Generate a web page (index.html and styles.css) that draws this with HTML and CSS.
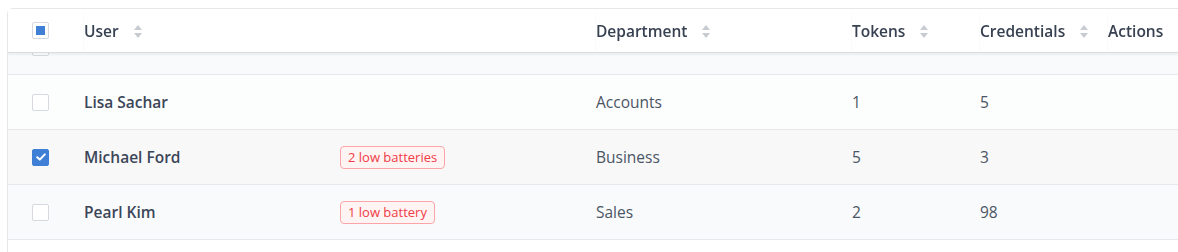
FILE: index.html
```html
<!DOCTYPE html>
<html lang="en">
<head>
    <meta charset="UTF-8">
    <meta name="viewport" content="width=device-width, initial-scale=1.0">
    <title>Users</title>
    <link rel="stylesheet" href="styles.css">
</head>
<body>

    <div class="table-card">
        <div class="table-scroll" id="table-scroll">
            <table class="user-table">
                <colgroup>
                    <col class="col-check">
                    <col class="col-user">
                    <col class="col-status">
                    <col class="col-dept">
                    <col class="col-num">
                    <col class="col-num">
                    <col class="col-actions">
                </colgroup>
                <thead>
                    <tr>
                        <th class="check-cell"><span class="checkbox indeterminate"></span></th>
                        <th colspan="2">User <span class="sort"><svg width="10" height="15" viewBox="0 0 10 15"><path d="M5 1 L9 6 L1 6 Z M5 14 L9 9 L1 9 Z"/></svg></span></th>
                        <th>Department <span class="sort"><svg width="10" height="15" viewBox="0 0 10 15"><path d="M5 1 L9 6 L1 6 Z M5 14 L9 9 L1 9 Z"/></svg></span></th>
                        <th>Tokens <span class="sort"><svg width="10" height="15" viewBox="0 0 10 15"><path d="M5 1 L9 6 L1 6 Z M5 14 L9 9 L1 9 Z"/></svg></span></th>
                        <th>Credentials <span class="sort"><svg width="10" height="15" viewBox="0 0 10 15"><path d="M5 1 L9 6 L1 6 Z M5 14 L9 9 L1 9 Z"/></svg></span></th>
                        <th>Actions</th>
                    </tr>
                </thead>
                <tbody>
                    <tr class="row-alt">
                        <td class="check-cell"><span class="checkbox"></span></td>
                        <td class="name">Anna Bell</td>
                        <td></td>
                        <td>Admin</td>
                        <td>3</td>
                        <td>12</td>
                        <td></td>
                    </tr>
                    <tr>
                        <td class="check-cell"><span class="checkbox"></span></td>
                        <td class="name">Lisa Sachar</td>
                        <td></td>
                        <td>Accounts</td>
                        <td>1</td>
                        <td>5</td>
                        <td></td>
                    </tr>
                    <tr class="row-selected">
                        <td class="check-cell"><span class="checkbox checked"><svg width="10" height="8" viewBox="0 0 10 8"><path d="M1.2 4.2 L3.8 6.6 L8.8 1.4"/></svg></span></td>
                        <td class="name">Michael Ford</td>
                        <td><span class="badge">2 low batteries</span></td>
                        <td>Business</td>
                        <td>5</td>
                        <td>3</td>
                        <td></td>
                    </tr>
                    <tr class="row-alt">
                        <td class="check-cell"><span class="checkbox"></span></td>
                        <td class="name">Pearl Kim</td>
                        <td><span class="badge">1 low battery</span></td>
                        <td>Sales</td>
                        <td>2</td>
                        <td>98</td>
                        <td></td>
                    </tr>
                </tbody>
            </table>
            <div class="table-end"></div>
        </div>
    </div>

    <script>
        // the list is shown scrolled a little, under the sticky header
        document.getElementById('table-scroll').scrollTop = 33;
    </script>
</body>
</html>
```

FILE: styles.css
```css
html, body {
    overflow: hidden;
}
body {
    font-family: "Open Sans", "Noto Sans", Arial, sans-serif;
    background-color: #fff;
    margin: 0;
    padding: 8px 0 0 7px;
    color: #4b5563;
}
.table-card {
    width: 1240px;
    border: 1px solid #e5e7eb;
    border-radius: 6px;
    background-color: #fff;
}
.table-scroll {
    height: 250px;
    overflow: hidden;
}
.table-end {
    height: 60px;
}
.user-table {
    width: 100%;
    table-layout: fixed;
    border-collapse: separate;
    border-spacing: 0;
    font-size: 15.5px;
}
.col-check { width: 76px; }
.col-user { width: 256px; }
.col-status { width: 256px; }
.col-dept { width: 256px; }
.col-num { width: 128px; }

.user-table th {
    position: sticky;
    top: 0;
    z-index: 2;
    height: 43px;
    padding: 0;
    text-align: left;
    font-weight: 600;
    color: #374151;
    background-color: #fff;
    border-bottom: 1px solid #d9dce1;
    box-shadow: 0 2px 2px rgba(0,0,0,0.05);
    white-space: nowrap;
}
.user-table td {
    height: 54px;
    padding: 0;
    border-bottom: 1px solid #e6e8eb;
    background-color: #fcfdfd;
}
.user-table .row-alt td {
    background-color: #f9fafc;
}
.user-table .row-selected td {
    background-color: #f8f8f9;
}
.user-table .check-cell {
    padding-left: 24px;
}
.user-table .name {
    font-weight: 600;
    color: #3b4658;
}

.sort {
    display: inline-block;
    margin-left: 10px;
    vertical-align: -2px;
}
.sort svg {
    display: block;
    fill: #c8ccd2;
}

.checkbox {
    display: flex;
    align-items: center;
    justify-content: center;
    box-sizing: border-box;
    width: 17px;
    height: 17px;
    border: 1px solid #d6d9de;
    border-radius: 2px;
    background-color: #fff;
}
.checkbox.indeterminate::after {
    content: "";
    width: 9px;
    height: 9px;
    background-color: #3f7fd6;
}
.checkbox.checked {
    border-color: #3f7fd6;
    background-color: #3f7fd6;
}
.checkbox.checked svg path {
    fill: none;
    stroke: #fff;
    stroke-width: 2;
    stroke-linecap: round;
    stroke-linejoin: round;
}

.badge {
    display: inline-block;
    box-sizing: border-box;
    height: 23px;
    line-height: 21px;
    padding: 0 7px;
    font-size: 13px;
    color: #ef3b45;
    background-color: #fff4f4;
    border: 1px solid #fca5a8;
    border-radius: 4px;
}
```
